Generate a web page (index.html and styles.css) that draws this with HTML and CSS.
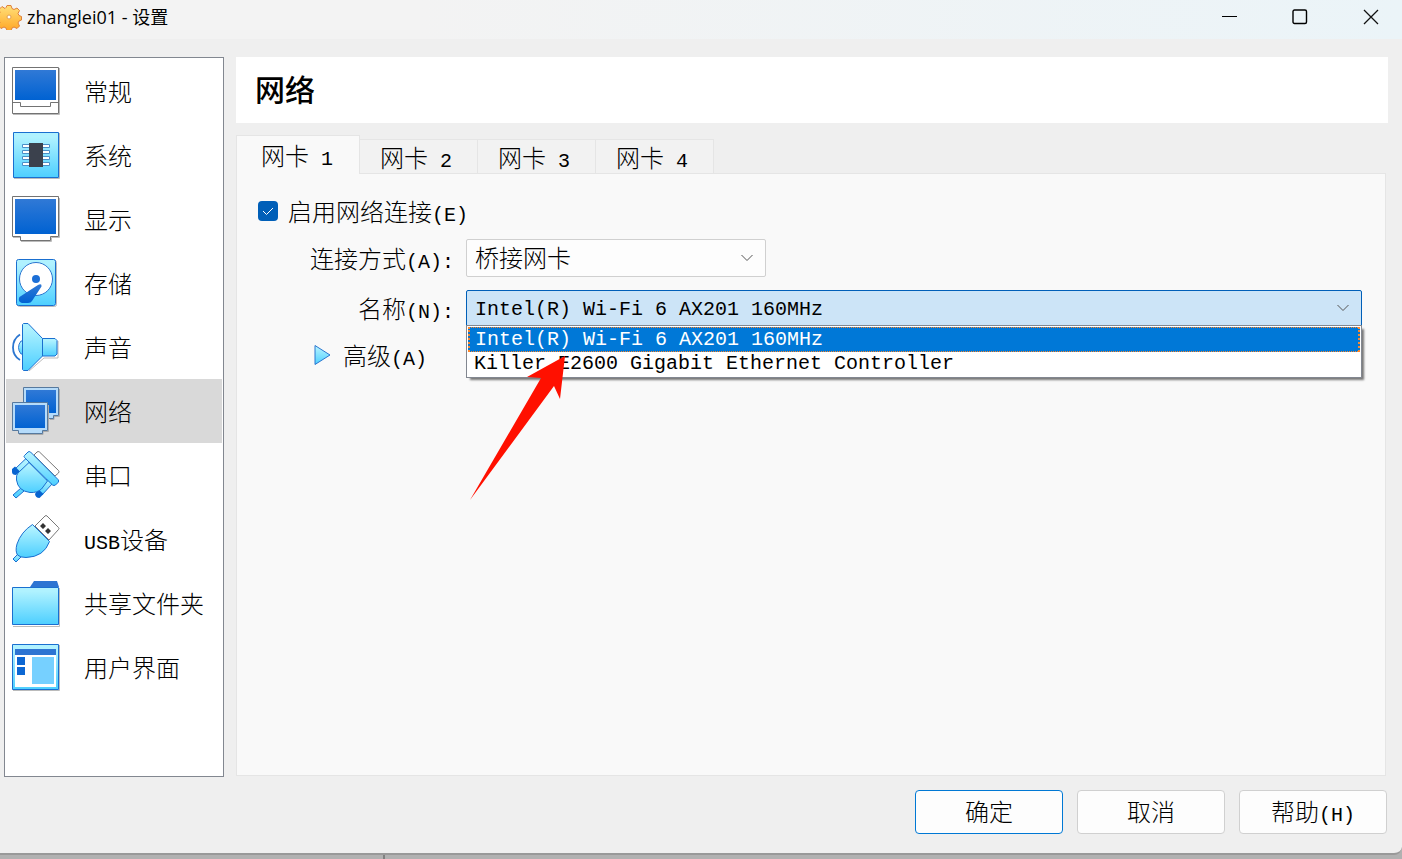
FILE: index.html
```html
<!DOCTYPE html>
<html lang="zh-CN">
<head>
  <meta charset="UTF-8">
  <title>zhanglei01 - 设置</title>
  <link rel="stylesheet" href="styles.css">
</head>
<body>

  <!-- shared gradients for the icons -->
  <svg class="defs" width="0" height="0" aria-hidden="true">
    <defs>
      <linearGradient id="sky" x1="0" y1="0" x2="0" y2="1">
        <stop offset="0.1" stop-color="#b0f2ff"/>
        <stop offset="1" stop-color="#4dcfff"/>
      </linearGradient>
      <linearGradient id="blue" x1="0" y1="0" x2="0" y2="1">
        <stop offset="0" stop-color="#3079d6"/>
        <stop offset="1" stop-color="#0062d2"/>
      </linearGradient>
      <linearGradient id="gold" x1="0" y1="0" x2="0" y2="1">
        <stop offset="0" stop-color="#ffe07a"/>
        <stop offset="1" stop-color="#ffa726"/>
      </linearGradient>
    </defs>
  </svg>

  <div class="window">
    <header class="titlebar">
      <svg class="app-icon" width="22" height="26" viewBox="0 0 22 26">
        <path d="M7 1.500h4l1 3 2 1 3-1.500 2.500 2.500-1.500 3 1 2 2.500 1v3.500l-2.500 1-1 2 1.500 3-2.500 2.500-3-1.500-2 1-1 2.500H7l-1-2.500-2-1-3 1.500-3-3 2-3-1-2-3-1v-4l3-1 1-2-1-3 3-3 3 2 1-1z" fill="url(#gold)" stroke="#e0803a"/>
        <circle cx="9" cy="13" r="2" fill="#fff" stroke="#e0a050"/>
      </svg>
      <h1>zhanglei01 - 设置</h1>
      <div class="window-buttons">
        <button type="button" aria-label="最小化">
          <svg width="16" height="16" viewBox="0 0 16 16"><path d="M0 7.500h15" stroke="#000"/></svg>
        </button>
        <button type="button" aria-label="最大化">
          <svg width="16" height="16" viewBox="0 0 16 16"><rect x="1" y="1" width="13.500" height="13.500" rx="1.500" fill="none" stroke="#000" stroke-width="1.400"/></svg>
        </button>
        <button type="button" aria-label="关闭">
          <svg width="16" height="16" viewBox="0 0 16 16"><path d="M1 1l14 14M15 1L1 15" stroke="#111" stroke-width="1.300"/></svg>
        </button>
      </div>
    </header>

    <div class="body">
      <nav class="sidebar">
        <a href="#general">
          <svg viewBox="0 0 48 48">
            <path d="M1 47.500h46.500V1" fill="none" stroke="#bbb"/>
            <path d="M.5.500h46v46H.5z" fill="#fff" stroke="#737373"/>
            <path d="M.5 35.500h8v4h30v-4h8" fill="none" stroke="#737373"/>
            <path d="M3 3h41v30H3z" fill="url(#blue)"/>
          </svg>
          常规
        </a>
        <a href="#system">
          <svg viewBox="0 0 48 48">
            <path d="M2 47.500h45.500V2" fill="none" stroke="#bbb"/>
            <path d="M1.500 1.500h45v45h-45z" fill="url(#sky)" stroke="#1a6fd0"/>
            <path d="M10.500 13.500h27v3h-27zM10.500 19.500h27v3h-27zM10.500 25.500h27v3h-27zM10.500 31.500h27v3h-27z" fill="#fff" stroke="#4a90c8"/>
            <path d="M17 12h14v24H17z" fill="#3b414d"/>
          </svg>
          系统
        </a>
        <a href="#display">
          <svg viewBox="0 0 48 48">
            <path d="M1 42.500h7M9 46.500h30.500v-4h8V3" fill="none" stroke="#bbb"/>
            <path d="M.5 1.500h46v40h-8v4h-30v-4h-8z" fill="#fff" stroke="#737373"/>
            <path d="M3 4h41v35H3z" fill="url(#blue)"/>
          </svg>
          显示
        </a>
        <a href="#storage">
          <svg viewBox="0 0 48 48">
            <rect x="5.500" y="1.500" width="39" height="46" rx="2" fill="none" stroke="#bbb"/>
            <rect x="4.500" y=".5" width="39" height="46" rx="2" fill="url(#sky)" stroke="#1a6fd0"/>
            <circle cx="24" cy="20" r="16.500" fill="#fff" stroke="#2b76d0"/>
            <circle cx="24" cy="20" r="4" fill="#1c6fd6"/>
            <path d="M26 26q4-2 3.500 1.500L20 42q-1 2-4 2h-6q-4-1-3-5 0-1 2-2z" fill="url(#blue)"/>
          </svg>
          存储
        </a>
        <a href="#audio">
          <svg viewBox="0 0 48 48">
            <path d="M17 48l15-13h14V18" fill="none" stroke="#bbb"/>
            <path d="M10.500 18H9q-2.500 3-2.500 6.500T9 31h1.500z" fill="url(#sky)" stroke="#2b76d0"/>
            <path d="M8 11.500Q1 16 1 24.500T8 37" fill="none" stroke="#2b76d0" stroke-width="1.800"/>
            <path d="M10.500 1.500l1-1h4.500l14.500 15V33L16 47.500h-4.500l-1-1z" fill="url(#sky)" stroke="#1a6fd0"/>
            <path d="M30.500 15.500H43l2 2v13.500l-2 2H30.500z" fill="url(#sky)" stroke="#1a6fd0"/>
          </svg>
          声音
        </a>
        <a href="#network" class="active">
          <svg viewBox="0 0 48 48">
            <path d="M38 32.500h4v-3h5.500V2" fill="none" stroke="#aaa"/>
            <path d="M11.500.500h35v28h-5v3h-25v-3h-5z" fill="#b5dbfa" stroke="#56799e"/>
            <path d="M14 3h30v23H14z" fill="url(#blue)"/>
            <path d="M7 47.500h24v-3h5.500V18" fill="none" stroke="#aaa"/>
            <path d="M.5 15.500h35v28h-5v3h-24v-3h-6z" fill="#b5dbfa" stroke="#56799e"/>
            <path d="M3 18h30v23H3z" fill="url(#blue)"/>
          </svg>
          网络
        </a>
        <a href="#serial">
          <svg viewBox="0 0 48 48">
            <path d="M22 4l3-3q1-1 2.500 0l19 18.500q1 1 0 2.500L43 25z" fill="#fff" stroke="#777"/>
            <path d="M1 44l8-7 3 3-8 7zM14 7.500l4 4L7 22l-4-4z" fill="url(#sky)" stroke="#1a6fd0"/>
            <path d="M35 28l5 5-10 11-5-5z" fill="url(#sky)" stroke="#1a6fd0"/>
            <path d="M0 18l3-2.500 5 5-4 3.500q-4 0-4-3zM26 38l5.500 5-4 4q-4 0-4.500-4z" fill="#0864d0"/>
            <path d="M17 11.500l18.500 18.500-6 8Q25 42 18 41.500 6 40 4.500 29 4 24 6 22z" fill="url(#sky)" stroke="#1a6fd0"/>
            <path d="M12.500 4.500L16 1q1-1 2.500 0L46 28.500q1.500 1.500 0 3L43.500 34q-1.500 1-3 0L12.500 6.500q-1-1 0-2z" fill="url(#sky)" stroke="#1a6fd0"/>
          </svg>
          串口
        </a>
        <a href="#usb">
          <svg viewBox="0 0 48 48">
            <path d="M23 11L33 1q1-1 2 0l11.500 11.500q1 1 0 2L37 25z" fill="#fff" stroke="#777"/>
            <path d="M31 8l3 3-3 3-3-3zM36 13l3 3-3 3-3-3z" fill="#333"/>
            <path d="M1 44l5-5 3 3-5 5z" fill="url(#sky)" stroke="#1a6fd0"/>
            <path d="M20.500 9.500l17 17Q32 42 14 42.500q-6 0-8.500-2.500Q3 36 5 29 9 17 20.500 9.500z" fill="url(#sky)" stroke="#1a6fd0"/>
          </svg>
          <span><span class="latin">USB</span>设备</span>
        </a>
        <a href="#shared-folders">
          <svg viewBox="0 0 48 48">
            <path d="M1 47.500h46.500V9" fill="none" stroke="#bbb"/>
            <path d="M18 8l4-6h23l2 6z" fill="#2d74d2"/>
            <path d="M.5 8.500h46v37H.5z" fill="url(#sky)" stroke="#1a6fd0"/>
          </svg>
          共享文件夹
        </a>
        <a href="#user-interface">
          <svg viewBox="0 0 48 48">
            <path d="M1 47.500h46.500V2" fill="none" stroke="#bbb"/>
            <path d="M.5 1.500h46v45H.5z" fill="url(#sky)" stroke="#1a6fd0"/>
            <path d="M3 6h41v38H3z" fill="#fff"/>
            <path d="M3 6h41v6H3z" fill="#2d74d2"/>
            <path d="M5 14h8v8H5zM5 24h8v8H5z" fill="#0c67d3"/>
            <path d="M20 14h22v27H20z" fill="#76d0ff"/>
          </svg>
          用户界面
        </a>
      </nav>

      <main class="content">
        <h2>网络</h2>

        <div class="tabs" role="tablist">
          <button type="button" role="tab" class="tab active" aria-selected="true">网卡<span class="latin"> 1</span></button>
          <button type="button" role="tab" class="tab">网卡<span class="latin"> 2</span></button>
          <button type="button" role="tab" class="tab">网卡<span class="latin"> 3</span></button>
          <button type="button" role="tab" class="tab">网卡<span class="latin"> 4</span></button>
        </div>

        <form class="panel">
          <div class="enable">
            <input type="checkbox" id="enable" checked>
            <label for="enable">启用网络连接<span class="latin">(E)</span></label>
          </div>

          <div class="fields">
            <label for="attached">连接方式<span class="latin">(A):</span></label>
            <div class="combo combo-short">
              <select id="attached">
                <option>桥接网卡</option>
              </select>
              <svg class="chevron" width="12" height="8" viewBox="0 0 12 8"><path d="M.5 1L6 6.500 11.500 1" fill="none" stroke="#555"/></svg>
            </div>

            <label for="adapter">名称<span class="latin">(N):</span></label>
            <div class="combo combo-open">
              <select id="adapter" class="latin">
                <option>Intel(R) Wi-Fi 6 AX201 160MHz</option>
                <option>Killer E2600 Gigabit Ethernet Controller</option>
              </select>
              <svg class="chevron" width="12" height="8" viewBox="0 0 12 8"><path d="M.5 1L6 6.500 11.500 1" fill="none" stroke="#555"/></svg>
              <ul class="popup latin" role="listbox">
                <li class="selected" role="option" aria-selected="true">Intel(R) Wi-Fi 6 AX201 160MHz</li>
                <li role="option">Killer E2600 Gigabit Ethernet Controller</li>
              </ul>
              <svg class="pointer" width="96" height="146" viewBox="0 0 96 146">
                <path d="M95 1L57 22l14 1L0 145l84-114 6 13z" fill="#ff1000"/>
              </svg>
            </div>

            <button type="button" class="advanced">
              <svg width="18" height="22" viewBox="0 0 18 22"><path d="M1 1.500v19l15-9.500z" fill="url(#sky)" stroke="#2b76d0" stroke-linejoin="round"/></svg>
              <span>高级<span class="latin">(A)</span></span>
            </button>
          </div>
        </form>
      </main>
    </div>

    <footer class="actions">
      <button type="button" class="primary">确定</button>
      <button type="button">取消</button>
      <button type="button">帮助<span class="latin">(H)</span></button>
    </footer>
  </div>

  <div class="desktop"></div>

</body>
</html>
```
FILE: styles.css
```css
* {
  box-sizing: border-box;
}
body {
  margin: 0;
  min-height: 100vh;
  display: flex;
  flex-direction: column;
  background: #b1b1b1;
  color: #000;
  font: 300 24px/32px "Noto Sans CJK SC", sans-serif;
}
button, select, input {
  font: inherit;
  color: inherit;
  margin: 0;
}
h1, h2, ul {
  margin: 0;
  padding: 0;
}
.defs {
  position: absolute;
}
.latin {
  font-family: "Liberation Mono", "Noto Sans CJK SC", monospace;
  font-size: 20px;
  font-weight: 400;
  line-height: 20px;
}
.window {
  flex: 1;
  display: flex;
  flex-direction: column;
  background: #efefef;
  border-bottom: 2px solid #999;
  border-radius: 0 0 8px 0;
}

/* title bar */
.titlebar {
  height: 39px;
  display: flex;
  align-items: center;
  padding-bottom: 6px;
  background: linear-gradient(90deg, #f3f3f3 30%, #ebf4f8);
}
.titlebar h1 {
  flex: 1;
  padding-left: 5px;
  font: 400 18px/24px "Open Sans", "Noto Sans CJK SC", sans-serif;
}
.window-buttons {
  display: flex;
}
.window-buttons button {
  width: 70px;
  height: 33px;
  display: flex;
  align-items: center;
  justify-content: center;
  padding: 0;
  border: 0;
  background: none;
}
.window-buttons button:last-child {
  width: 67px;
  padding-left: 5px;
}

.body {
  flex: 1;
  display: flex;
  gap: 12px;
  padding: 18px 14px 0 4px;
}

/* categories */
.sidebar {
  width: 220px;
  padding: 1px;
  border: 1px solid #828790;
  background: #fff;
}
.sidebar a {
  height: 64px;
  display: flex;
  align-items: center;
  gap: 24px;
  padding-left: 6px;
  color: #000;
  text-decoration: none;
  white-space: nowrap;
}
.sidebar a.active {
  background: #d9d9d9;
}
.sidebar svg {
  width: 48px;
  height: 48px;
}

/* page */
.content {
  flex: 1;
  display: flex;
  flex-direction: column;
}
.content h2 {
  height: 66px;
  padding: 0 19px;
  background: #fff;
  font-size: 30px;
  font-weight: 500;
  line-height: 62px;
}
.tabs {
  z-index: 1;
  display: flex;
  align-items: flex-end;
  margin-top: 12px;
}
.tab {
  height: 35px;
  padding: 0 25px 0 20px;
  border: 1px solid #e5e5e5;
  border-left: 0;
  background: #f2f2f2;
  white-space: pre;
}
.tab.active {
  height: 39px;
  padding: 0 26px 0 24px;
  border-left: 1px solid #e5e5e5;
  border-bottom: 0;
  background: #f9f9f9;
}
.panel {
  flex: 1;
  margin: -1px 2px 1px 0;
  padding: 21px 23px 0 21px;
  border: 1px solid #e5e5e5;
  background: #f9f9f9;
}
.enable {
  display: flex;
  align-items: center;
  gap: 10px;
}
.enable input {
  appearance: none;
  width: 20px;
  height: 20px;
  border-radius: 4px;
  background: #005fb8 url('data:image/svg+xml,<svg xmlns="http://www.w3.org/2000/svg" viewBox="0 0 20 20"><path d="M5 10l3.500 3.500L15 7" fill="none" stroke="white"/></svg>');
}
.fields {
  display: grid;
  grid-template-columns: 196px 1fr;
  align-items: center;
  gap: 12px;
  margin-top: 12px;
}
.fields label {
  text-align: right;
  white-space: nowrap;
}
.combo {
  position: relative;
  height: 38px;
}
.combo-short {
  width: 300px;
}
.combo select {
  appearance: none;
  width: 100%;
  height: 38px;
  padding: 0 8px;
  border: 1px solid #d0d0d0;
  border-radius: 2px;
  background: #fdfdfd;
}
.combo-short select {
  padding-bottom: 2px;
}
.combo select.latin {
  font-family: "Liberation Mono", monospace;
  font-size: 20px;
  padding-top: 3px;
}
.combo-open select {
  border-color: #005fb8;
  background: #cce4f7;
}
.chevron {
  position: absolute;
  right: 13px;
  top: 15px;
  pointer-events: none;
}
.popup {
  position: absolute;
  top: 36px;
  left: 0;
  right: 0;
  padding: 1px;
  border: 1px solid #828790;
  background: #fff;
  box-shadow: 3px 3px 2px -1px #777;
  list-style: none;
}
.popup li {
  height: 24px;
  padding: 0 6px;
  line-height: 24px;
}
.popup .selected {
  height: 25px;
  padding: 0 5px;
  border: 2px dotted #ff8728;
  border-width: 1px 2px;
  background: #0078d7;
  color: #fff;
}
.pointer {
  position: absolute;
  left: 4px;
  top: 66px;
}
.advanced {
  display: flex;
  align-items: center;
  gap: 11px;
  padding: 0 0 0 56px;
  border: 0;
  background: none;
}

/* dialog buttons */
.actions {
  display: flex;
  justify-content: flex-end;
  gap: 14px;
  padding: 13px 15px 19px;
}
.actions button {
  width: 148px;
  height: 44px;
  padding: 0 0 2px;
  border: 1px solid #d0d0d0;
  border-radius: 4px;
  background: #fdfdfd;
}
.actions .primary {
  border-color: #0078d4;
}

/* strip of the desktop below the window */
.desktop {
  height: 4px;
  background: linear-gradient(90deg, transparent 383px, #808080 383px, #808080 385px, transparent 385px);
}
```
